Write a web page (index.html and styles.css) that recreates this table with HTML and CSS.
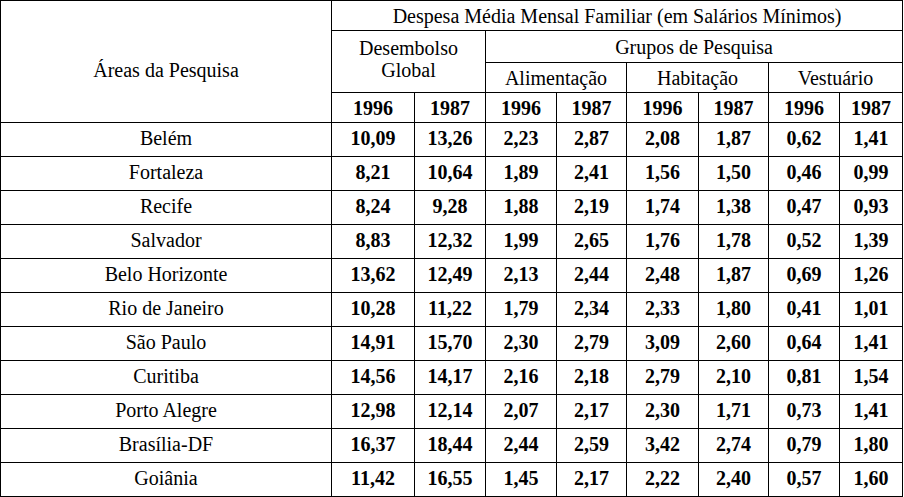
FILE: index.html
```html
<!DOCTYPE html>
<html lang="pt">
<head>
<meta charset="utf-8">
<title>Despesa Média Mensal Familiar</title>
<link rel="stylesheet" href="styles.css">
</head>
<body>
<table class="tabela">
  <colgroup>
    <col class="c-area">
    <col class="c-d1">
    <col class="c-d2">
    <col class="c-a1">
    <col class="c-a2">
    <col class="c-h1">
    <col class="c-h2">
    <col class="c-v1">
    <col class="c-v2">
  </colgroup>
  <thead>
    <tr class="r-h1">
      <th rowspan="4" class="areas">Áreas da Pesquisa</th>
      <th colspan="8">Despesa Média Mensal Familiar (em Salários Mínimos)</th>
    </tr>
    <tr class="r-h2">
      <th colspan="2" rowspan="2" class="desemb">Desembolso<br>Global</th>
      <th colspan="6">Grupos de Pesquisa</th>
    </tr>
    <tr class="r-h3">
      <th colspan="2">Alimentação</th>
      <th colspan="2">Habitação</th>
      <th colspan="2">Vestuário</th>
    </tr>
    <tr class="r-h4 anos">
      <th>1996</th><th>1987</th>
      <th>1996</th><th>1987</th>
      <th>1996</th><th>1987</th>
      <th>1996</th><th>1987</th>
    </tr>
  </thead>
  <tbody>
    <tr><td class="cidade">Belém</td><td>10,09</td><td>13,26</td><td>2,23</td><td>2,87</td><td>2,08</td><td>1,87</td><td>0,62</td><td>1,41</td></tr>
    <tr><td class="cidade">Fortaleza</td><td>8,21</td><td>10,64</td><td>1,89</td><td>2,41</td><td>1,56</td><td>1,50</td><td>0,46</td><td>0,99</td></tr>
    <tr><td class="cidade">Recife</td><td>8,24</td><td>9,28</td><td>1,88</td><td>2,19</td><td>1,74</td><td>1,38</td><td>0,47</td><td>0,93</td></tr>
    <tr><td class="cidade">Salvador</td><td>8,83</td><td>12,32</td><td>1,99</td><td>2,65</td><td>1,76</td><td>1,78</td><td>0,52</td><td>1,39</td></tr>
    <tr><td class="cidade">Belo Horizonte</td><td>13,62</td><td>12,49</td><td>2,13</td><td>2,44</td><td>2,48</td><td>1,87</td><td>0,69</td><td>1,26</td></tr>
    <tr><td class="cidade">Rio de Janeiro</td><td>10,28</td><td>11,22</td><td>1,79</td><td>2,34</td><td>2,33</td><td>1,80</td><td>0,41</td><td>1,01</td></tr>
    <tr><td class="cidade">São Paulo</td><td>14,91</td><td>15,70</td><td>2,30</td><td>2,79</td><td>3,09</td><td>2,60</td><td>0,64</td><td>1,41</td></tr>
    <tr><td class="cidade">Curitiba</td><td>14,56</td><td>14,17</td><td>2,16</td><td>2,18</td><td>2,79</td><td>2,10</td><td>0,81</td><td>1,54</td></tr>
    <tr><td class="cidade">Porto Alegre</td><td>12,98</td><td>12,14</td><td>2,07</td><td>2,17</td><td>2,30</td><td>1,71</td><td>0,73</td><td>1,41</td></tr>
    <tr><td class="cidade">Brasília-DF</td><td>16,37</td><td>18,44</td><td>2,44</td><td>2,59</td><td>3,42</td><td>2,74</td><td>0,79</td><td>1,80</td></tr>
    <tr><td class="cidade">Goiânia</td><td>11,42</td><td>16,55</td><td>1,45</td><td>2,17</td><td>2,22</td><td>2,40</td><td>0,57</td><td>1,60</td></tr>
  </tbody>
</table>
</body>
</html>
```

FILE: styles.css
```css
html, body {
  margin: 0;
  padding: 0;
  background: #fff;
}

body {
  font-family: "Liberation Serif", "Times New Roman", serif;
  font-size: 20px;
  color: #000;
}

.tabela {
  border-collapse: collapse;
  table-layout: fixed;
  width: 903px;
}

.tabela th,
.tabela td {
  border: 1px solid #000;
  padding: 0;
  text-align: center;
  vertical-align: middle;
  white-space: nowrap;
  line-height: 22px;
}

.tabela th {
  font-weight: normal;
}

.tabela td {
  font-weight: bold;
  padding-bottom: 3px;
}

.tabela td.cidade {
  font-weight: normal;
}

.tabela .anos th {
  font-weight: bold;
}

.c-area { width: 331px; }
.c-d1 { width: 83px; }
.c-d2 { width: 71px; }
.c-a1 { width: 71px; }
.c-a2 { width: 70px; }
.c-h1 { width: 72px; }
.c-h2 { width: 70px; }
.c-v1 { width: 71px; }
.c-v2 { width: 63px; }

.r-h1 { height: 30px; }
.r-h2 { height: 32px; }
.r-h3 { height: 30px; }
.r-h4 { height: 30px; }
.tabela tbody tr { height: 34px; }

.tabela th.areas {
  padding-top: 16px;
}

.tabela th.desemb {
  padding-bottom: 6px;
}
```
